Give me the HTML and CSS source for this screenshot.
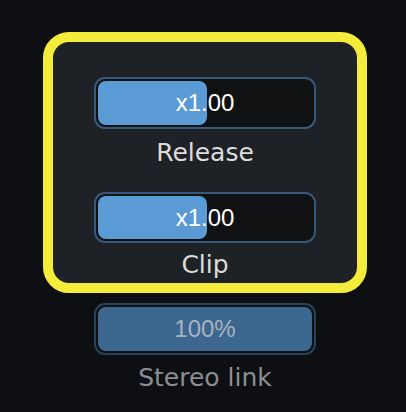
FILE: index.html
```html
<!DOCTYPE html>
<html>
<head>
    <meta charset="UTF-8">
    <title>Release / Clip</title>
    <link rel="stylesheet" href="styles.css">
</head>
<body>
    <div class="panel">
        <div class="group">
            <div class="slider">
                <div class="fill" style="width: 51%"></div>
                <span class="value">x1.00</span>
            </div>
            <div class="label">Release</div>

            <div class="slider second">
                <div class="fill" style="width: 51%"></div>
                <span class="value">x1.00</span>
            </div>
            <div class="label last">Clip</div>
        </div>

        <div class="slider muted">
            <div class="fill" style="width: 100%"></div>
            <span class="value">100%</span>
        </div>
        <div class="label dim">Stereo link</div>
    </div>
</body>
</html>
```

FILE: styles.css
```css
body {
    margin: 0;
    background: #0d0f12;
    font-family: "DejaVu Sans", "Liberation Sans", sans-serif;
    height: 412px;
    overflow: hidden;
}
.panel {
    display: flex;
    flex-direction: column;
    align-items: center;
    padding: 32px 0 0 4px;
}
.group {
    width: 222px;
    padding: 35px 41px 2px 41px;
    border: 10px solid #f3ec3a;
    border-radius: 26px;
    background: #1e2227;
    display: flex;
    flex-direction: column;
}
.slider {
    position: relative;
    width: 222px;
    height: 52px;
    box-sizing: border-box;
    border: 2px solid #36597c;
    border-radius: 11px;
    background: #101112;
    padding: 2px;
    display: flex;
}
.slider.second {
    margin-top: 23px;
    height: 51px;
}
.fill {
    height: 100%;
    border-radius: 8px;
    background: #5b9bd5;
}
.value {
    position: absolute;
    left: 0;
    right: 0;
    top: 0;
    bottom: 0;
    display: flex;
    align-items: center;
    justify-content: center;
    font-family: "Liberation Sans", Arial, sans-serif;
    font-size: 24px;
    color: #ffffff;
}
.label {
    margin-top: 8px;
    text-align: center;
    font-size: 25px;
    line-height: 32px;
    color: #dcdcdc;
}
.label.last {
    margin-top: 6px;
}
.slider.muted {
    margin-top: 10px;
    border-color: #26415a;
}
.muted .fill {
    background: #3c6791;
}
.muted .value {
    color: #a9b3bd;
}
.label.dim {
    margin-top: 7px;
    color: #8a8e93;
}
```
